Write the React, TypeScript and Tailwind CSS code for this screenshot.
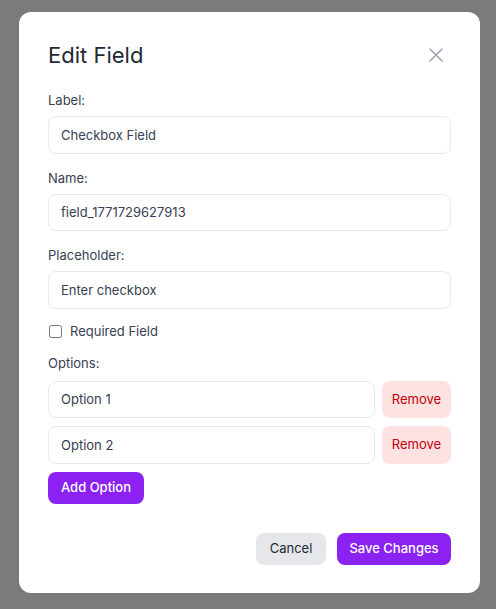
import React from "react";

function XIcon() {
  return (
    <svg width="24" height="24" viewBox="0 0 24 24" fill="none" stroke="currentColor" strokeWidth="1.5" strokeLinecap="round" strokeLinejoin="round">
      <path d="M18 6 6 18" />
      <path d="m6 6 12 12" />
    </svg>
  );
}

function Field({ label, value }: { label: string; value: string }) {
  return (
    <div>
      <label className="block text-[13px] leading-5 font-normal text-[#374151] mb-[6px]">{label}</label>
      <input
        readOnly
        value={value}
        className="w-full h-[37.5px] px-3 text-[13px] text-[#374151] bg-white border border-[#e8e7f7] rounded-lg outline-none"
      />
    </div>
  );
}

export default function App() {
  return (
    <div
      className="w-[496px] h-[609px] bg-[#7b7b7b] pt-[12px] pl-[19px]"
      style={{ fontFamily: "Inter, 'Noto Sans', sans-serif" }}
    >
      <div className="w-[461px] h-[581px] bg-white rounded-xl pt-[29px] pb-[29px] pl-[29px] pr-[29px] flex flex-col">
        <div className="flex items-center justify-between h-[28px]">
          <h2 className="text-[22px] leading-[28px] font-normal text-[#1f2937]">Edit Field</h2>
          <button className="text-[#9ca3af] mr-[3px] -mt-[1px]">
            <XIcon />
          </button>
        </div>

        <div className="mt-[21px] flex flex-col gap-[14px]">
          <Field label="Label:" value="Checkbox Field" />
          <Field label="Name:" value="field_1771729627913" />
          <Field label="Placeholder:" value="Enter checkbox" />
        </div>

        <label className="mt-[13px] flex items-center h-5 text-[13px] text-[#374151] font-normal">
          <input type="checkbox" className="w-[13px] h-[13px] ml-[1px] accent-[#8b22f2]" />
          <span className="ml-2">Required Field</span>
        </label>

        <div className="mt-[12px]">
          <div className="text-[13px] leading-5 font-normal text-[#374151] mb-[7.5px]">Options:</div>
          <div className="flex flex-col gap-2">
            {["Option 1", "Option 2"].map((o) => (
              <div key={o} className="flex gap-[7px]">
                <input
                  readOnly
                  value={o}
                  className="flex-1 min-w-0 h-[37.5px] px-3 text-[13px] text-[#374151] bg-white border border-[#e8e7f7] rounded-lg outline-none"
                />
                <button className="w-[69px] h-[37.5px] text-[13px] text-[#c10007] bg-[#fee2e2] rounded-lg">
                  Remove
                </button>
              </div>
            ))}
          </div>
          <button className="mt-[8px] h-[32px] w-[96px] text-[13px] font-medium text-white bg-[#8b22f2] rounded-lg">
            Add Option
          </button>
        </div>

        <div className="mt-[29px] flex justify-end gap-[11px]">
          <button className="h-[32px] w-[70px] text-[13px] text-[#1f2937] bg-[#e5e7eb] rounded-lg">Cancel</button>
          <button className="h-[32px] w-[114px] text-[13px] font-medium text-white bg-[#8b22f2] rounded-lg">
            Save Changes
          </button>
        </div>
      </div>
    </div>
  );
}
